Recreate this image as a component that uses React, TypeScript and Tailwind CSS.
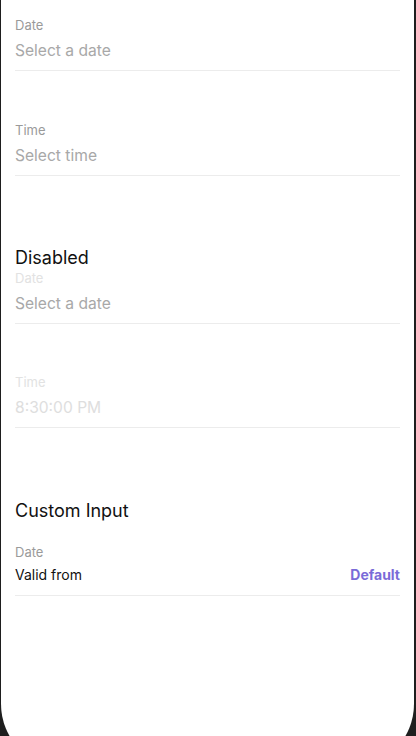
import React from "react";

function Field({
  label,
  value,
  labelClass,
  valueClass,
  top,
  right,
}: {
  label: string;
  value: string;
  labelClass: string;
  valueClass: string;
  top: string;
  right?: React.ReactNode;
}) {
  return (
    <div className={`flex flex-col border-b border-[#ececec] pb-[9px] ${top}`}>
      <div className={`text-[13px] leading-4 ${labelClass}`}>{label}</div>
      <div className="mt-[8px] flex items-center justify-between">
        <div className={`leading-5 ${valueClass}`}>{value}</div>
        {right}
      </div>
    </div>
  );
}

export default function App() {
  return (
    <div
      className="h-[736px] w-[416px] overflow-hidden bg-[#1e1e1e]"
      style={{ fontFamily: "Inter, 'Noto Sans', sans-serif" }}
    >
      <div className="ml-[1px] mr-[2px] h-[768px] rounded-b-[64px] bg-white px-[14px]">
        <div className="flex flex-col pt-[17px]">
          <Field
            label="Date"
            value="Select a date"
            labelClass="text-[#9a9a9a]"
            valueClass="text-[15.6px] text-[#a8a8a8]"
            top=""
          />
          <Field
            label="Time"
            value="Select time"
            labelClass="text-[#9a9a9a]"
            valueClass="text-[15.6px] text-[#a8a8a8]"
            top="mt-[51px]"
          />
          <div className="mt-[71px] text-[18px] leading-[22px] text-[#111]">Disabled</div>
          <Field
            label="Date"
            value="Select a date"
            labelClass="text-[#e2e2e2]"
            valueClass="text-[15.6px] text-[#a8a8a8]"
            top="mt-[1px]"
          />
          <Field
            label="Time"
            value="8:30:00 PM"
            labelClass="text-[#e2e2e2]"
            valueClass="text-[15.6px] text-[#dedede]"
            top="mt-[50px]"
          />
          <div className="mt-[72px] text-[18px] leading-[22px] text-[#111]">Custom Input</div>
          <div className="mt-[22px] flex flex-col border-b border-[#ececec] pb-[10px]">
            <div className="text-[13px] leading-4 text-[#9a9a9a]">Date</div>
            <div className="mt-[5px] flex items-center justify-between leading-5">
              <div className="text-[14px] text-[#111]">Valid from</div>
              <div className="text-[14px] font-bold text-[#7a6bd8]">Default</div>
            </div>
          </div>
        </div>
      </div>
    </div>
  );
}
